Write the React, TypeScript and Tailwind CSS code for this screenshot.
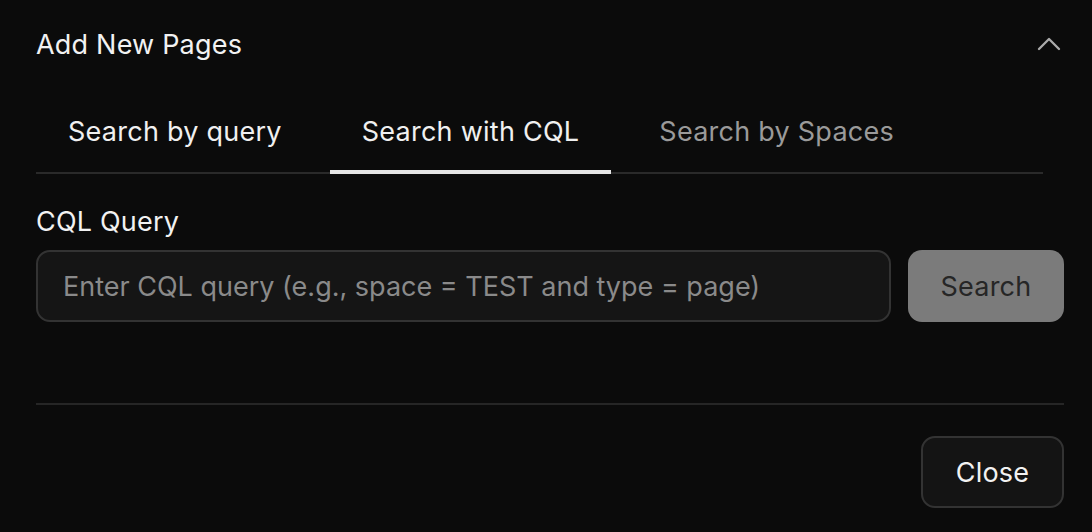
import { ChevronUp } from 'lucide-react'

const tabs = ['Search by query', 'Search with CQL', 'Search by Spaces']

export default function App() {
  const active = 1

  return (
    <div
      className="w-[1092px] h-[532px] bg-[#0b0b0b] text-white overflow-hidden"
      style={{ fontFamily: 'Inter, "Noto Sans", sans-serif' }}
    >
      <div className="pl-[36px] pr-[28px]">
        <div className="flex items-center justify-between h-[90px]">
          <span className="text-[27px] tracking-[0.2px] text-[#f2f2f2]">Add New Pages</span>
          <ChevronUp className="w-[40px] h-[40px] text-[#ababab] mr-[-5px] mt-[-3px]" strokeWidth={1.4} />
        </div>

        <div className="flex gap-[16px] border-b-2 border-[#2a2a2a] mr-[21px] h-[84px]">
          {tabs.map((t, i) => (
            <div
              key={t}
              className={`flex items-center pt-[4px] px-[32px] text-[27px] tracking-[0.25px] mb-[-2px] border-b-4 ${
                i === active ? 'border-[#e6e6e6]' : 'border-transparent'
              } ${i === 2 ? 'text-[#9a9a9a]' : 'text-[#f0f0f0]'}`}
            >
              {t}
            </div>
          ))}
        </div>

        <div className="pt-[30px] text-[27px] tracking-[0.2px] text-[#f2f2f2] leading-[36px]">CQL Query</div>

        <div className="flex gap-[17px] mt-[10px]">
          <div className="flex-1 h-[72px] flex items-center pt-[3px] px-[25px] rounded-[14px] border-2 border-[#333333] bg-[#151515]">
            <span className="text-[27px] text-[#8a8a8a]">Enter CQL query (e.g., space = TEST and type = page)</span>
          </div>
          <div className="w-[156px] h-[72px] flex items-center justify-center pt-[3px] rounded-[14px] bg-[#7b7b7b] text-[27px] tracking-[0.2px] text-[#262626]">
            Search
          </div>
        </div>

        <div className="mt-[81px] border-t-2 border-[#262626]" />

        <div className="flex justify-end mt-[31px]">
          <div className="w-[143px] h-[72px] flex items-center justify-center pt-[3px] rounded-[14px] border-2 border-[#333333] bg-[#141414] text-[27px] tracking-[0.2px] text-[#f2f2f2]">
            Close
          </div>
        </div>
      </div>
    </div>
  )
}
